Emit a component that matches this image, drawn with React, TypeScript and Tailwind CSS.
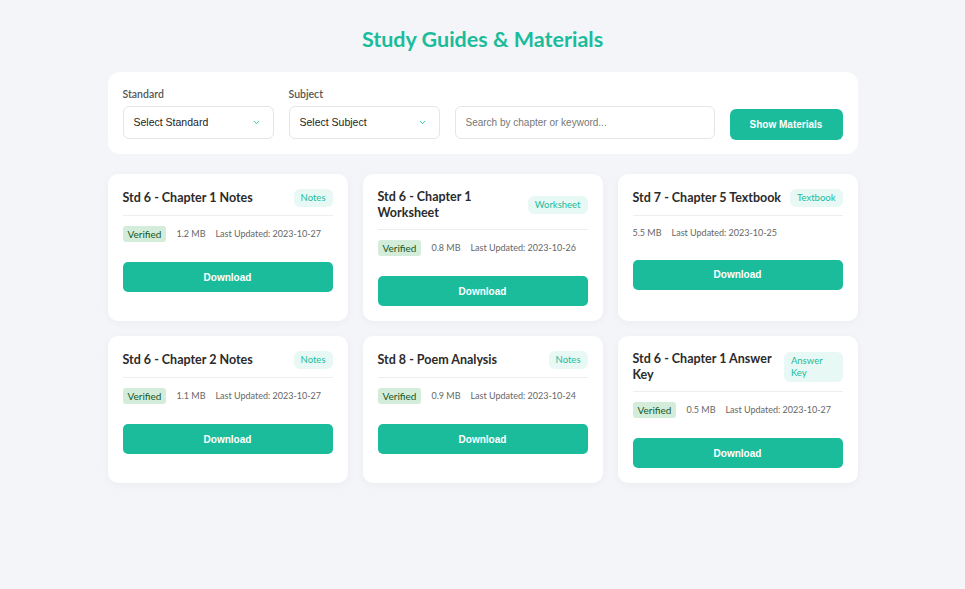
import { ChevronDown } from "lucide-react";

type Material = {
  title: string;
  tag: string;
  verified: boolean;
  size: string;
  updated: string;
};

const MATERIALS: Material[] = [
  { title: "Std 6 - Chapter 1 Notes", tag: "Notes", verified: true, size: "1.2 MB", updated: "2023-10-27" },
  { title: "Std 6 - Chapter 1 Worksheet", tag: "Worksheet", verified: true, size: "0.8 MB", updated: "2023-10-26" },
  { title: "Std 7 - Chapter 5 Textbook", tag: "Textbook", verified: false, size: "5.5 MB", updated: "2023-10-25" },
  { title: "Std 6 - Chapter 2 Notes", tag: "Notes", verified: true, size: "1.1 MB", updated: "2023-10-27" },
  { title: "Std 8 - Poem Analysis", tag: "Notes", verified: true, size: "0.9 MB", updated: "2023-10-24" },
  { title: "Std 6 - Chapter 1 Answer Key", tag: "Answer Key", verified: true, size: "0.5 MB", updated: "2023-10-27" },
];

const formFont = { fontFamily: '"Liberation Sans", Arial, sans-serif' };

function SelectBox({ label, placeholder }: { label: string; placeholder: string }) {
  return (
    <div className="flex w-[151px] flex-col gap-[5px]">
      <label className="text-[10.5px] font-semibold leading-[14px] text-[#555]">{label}</label>
      <div
        className="flex h-[33px] items-center justify-between rounded-[6px] border border-[#e3e6ea] bg-white pl-[10px] pr-[12px] text-[10.5px] text-[#222]"
        style={formFont}
      >
        <span>{placeholder}</span>
        <ChevronDown className="h-[9px] w-[9px] text-[#1abc9c]" strokeWidth={2.5} />
      </div>
    </div>
  );
}

function MaterialCard({ item }: { item: Material }) {
  return (
    <div className="flex flex-col rounded-[10px] bg-white p-[15px] shadow-[0_2px_8px_rgba(0,0,0,0.04)]">
      <div className="flex items-center justify-between gap-[5px] border-b border-[#eceef0] pb-[8px]">
        <h3 className="text-[12.5px] font-bold leading-[16px] text-[#2b2b2b]">{item.title}</h3>
        <span className="rounded-[6px] bg-[#e8f8f5] px-[7px] py-[3px] text-[9.5px] leading-[12px] text-[#1abc9c]">
          {item.tag}
        </span>
      </div>
      <div className="mt-[10px] flex items-center gap-[10px] whitespace-nowrap text-[9px] text-[#666]">
        {item.verified && (
          <span className="rounded-[3px] bg-[#d4edda] px-[5px] py-[2px] text-[10px] leading-[12px] text-[#155724]">
            Verified
          </span>
        )}
        <span>{item.size}</span>
        <span>Last Updated: {item.updated}</span>
      </div>
      <button
        className="mt-[20px] h-[30px] w-full rounded-[5px] bg-[#1abc9c] text-[10px] font-bold text-white"
        style={formFont}
      >
        Download
      </button>
    </div>
  );
}

export default function App() {
  return (
    <div
      className="min-h-screen bg-[#f3f5f9] pt-[26px]"
      style={{ fontFamily: 'Lato, "Noto Sans", sans-serif' }}
    >
      <div className="mx-auto w-[750px]">
        <h1 className="text-center text-[21.5px] font-bold leading-[27px] text-[#1abc9c]">
          Study Guides &amp; Materials
        </h1>

        <div className="mt-[19px] flex items-end gap-[15px] rounded-[12px] bg-white p-[15px]">
          <SelectBox label="Standard" placeholder="Select Standard" />
          <SelectBox label="Subject" placeholder="Select Subject" />
          <input
            className="h-[33px] flex-1 rounded-[6px] border border-[#e3e6ea] bg-white px-[10px] text-[10px] text-[#222] placeholder:text-[#777] focus:outline-none"
            style={formFont}
            placeholder="Search by chapter or keyword..."
          />
          <button
            className="mb-[-1px] h-[31px] w-[113px] rounded-[6px] bg-[#1abc9c] text-[10px] font-bold text-white"
            style={formFont}
          >
            Show Materials
          </button>
        </div>

        <div className="mt-[20px] grid grid-cols-3 gap-[15px]">
          {MATERIALS.map((m) => (
            <MaterialCard key={m.title} item={m} />
          ))}
        </div>
      </div>
    </div>
  );
}
